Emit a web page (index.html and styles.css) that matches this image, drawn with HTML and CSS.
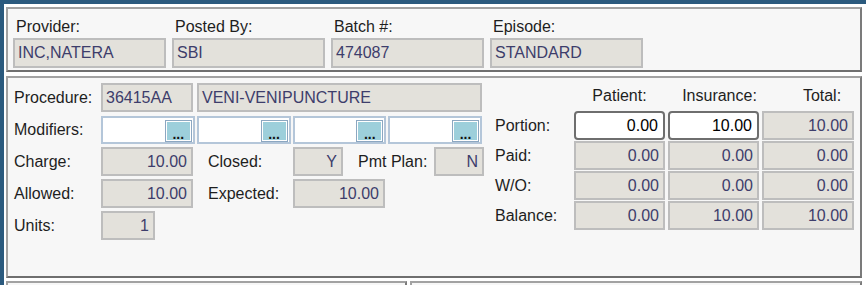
FILE: index.html
```html
<!DOCTYPE html>
<html lang="en">
<head>
    <meta charset="UTF-8">
    <title>Charge Detail</title>
    <link rel="stylesheet" href="styles.css">
</head>
<body>
    <div class="frame">
        <div class="panel header-panel">
            <div class="head-col">
                <div class="head-label">Provider:</div>
                <div class="fld head-fld">INC,NATERA</div>
            </div>
            <div class="head-col">
                <div class="head-label">Posted By:</div>
                <div class="fld head-fld">SBI</div>
            </div>
            <div class="head-col">
                <div class="head-label">Batch #:</div>
                <div class="fld head-fld">474087</div>
            </div>
            <div class="head-col">
                <div class="head-label">Episode:</div>
                <div class="fld head-fld">STANDARD</div>
            </div>
        </div>

        <div class="panel detail-panel">
            <div class="charge-info">
                <div class="row">
                    <span class="lbl">Procedure:</span>
                    <div class="fld w-code">36415AA</div>
                    <div class="fld w-desc">VENI-VENIPUNCTURE</div>
                </div>
                <div class="row">
                    <span class="lbl">Modifiers:</span>
                    <div class="modifier"><button class="dots">...</button></div>
                    <div class="modifier"><button class="dots">...</button></div>
                    <div class="modifier"><button class="dots">...</button></div>
                    <div class="modifier"><button class="dots">...</button></div>
                </div>
                <div class="row">
                    <span class="lbl">Charge:</span>
                    <div class="fld num w-code">10.00</div>
                    <span class="lbl lbl-mid">Closed:</span>
                    <div class="fld num w-flag">Y</div>
                    <span class="lbl lbl-plan">Pmt Plan:</span>
                    <div class="fld num w-flag">N</div>
                </div>
                <div class="row">
                    <span class="lbl">Allowed:</span>
                    <div class="fld num w-code">10.00</div>
                    <span class="lbl lbl-mid">Expected:</span>
                    <div class="fld num w-code">10.00</div>
                </div>
                <div class="row">
                    <span class="lbl">Units:</span>
                    <div class="fld num w-units">1</div>
                </div>
            </div>

            <div class="balances">
                <div class="bal-head">
                    <span></span>
                    <span class="col-patient">Patient:</span>
                    <span class="col-insurance">Insurance:</span>
                    <span class="col-total">Total:</span>
                </div>
                <div class="bal-row">
                    <span class="lbl">Portion:</span>
                    <div class="edit num">0.00</div>
                    <div class="edit num">10.00</div>
                    <div class="fld num">10.00</div>
                </div>
                <div class="bal-row">
                    <span class="lbl">Paid:</span>
                    <div class="fld num">0.00</div>
                    <div class="fld num">0.00</div>
                    <div class="fld num">0.00</div>
                </div>
                <div class="bal-row">
                    <span class="lbl">W/O:</span>
                    <div class="fld num">0.00</div>
                    <div class="fld num">0.00</div>
                    <div class="fld num">0.00</div>
                </div>
                <div class="bal-row">
                    <span class="lbl">Balance:</span>
                    <div class="fld num">0.00</div>
                    <div class="fld num">10.00</div>
                    <div class="fld num">10.00</div>
                </div>
            </div>
        </div>

        <div class="bottom-panels">
            <div class="panel bottom-left"></div>
            <div class="panel bottom-right"></div>
        </div>
    </div>
</body>
</html>
```

FILE: styles.css
```css
body {
    margin: 0;
    background: #2b5a7e;
    font-family: "Liberation Sans", Arial, sans-serif;
    font-size: 16px;
    color: #1e1e1e;
    overflow: hidden;
}

.frame {
    margin: 4px 0 0 4px;
    padding: 3px 4px 0 2px;
    background: #ffffff;
    min-height: 300px;
}

.panel {
    box-sizing: border-box;
    width: 856px;
    background: #f7f7f7;
    border: 2px solid;
    border-color: #a2a2a2 #7b7b7b #6f6f6f #a2a2a2;
}

/* read-only field */
.fld {
    box-sizing: border-box;
    height: 29px;
    line-height: 25px;
    padding: 0 4px 0 3px;
    background: #e3e1db;
    border: 2px solid #bdbdbd;
    color: #3d3d6b;
    white-space: nowrap;
}

.num {
    text-align: right;
}

/* header panel */
.header-panel {
    height: 65px;
    display: flex;
    gap: 6px;
    padding: 9px 0 0 5px;
}

.head-col {
    width: 153px;
}

.head-label {
    line-height: 18px;
    padding-left: 3px;
    margin-bottom: 2px;
}

.head-fld {
    height: 30px;
    line-height: 26px;
}

/* detail panel */
.detail-panel {
    margin-top: 4px;
    height: 202px;
    display: flex;
}

.charge-info {
    width: 470px;
    padding: 5px 0 0 6px;
    display: flex;
    flex-direction: column;
    gap: 3px;
}

.row {
    display: flex;
    align-items: center;
    height: 29px;
}

.lbl {
    width: 87px;
    flex-shrink: 0;
}

.lbl-mid {
    width: 85px;
    margin-left: 15px;
}

.lbl-plan {
    width: 76px;
    margin-left: 15px;
}

.w-code {
    width: 92px;
}

.w-desc {
    width: 285px;
    margin-left: 4px;
}

.w-flag {
    width: 50px;
}

.w-units {
    width: 54px;
}

.modifier {
    box-sizing: border-box;
    width: 94px;
    height: 28px;
    margin-right: 2px;
    background: #ffffff;
    border: 2px solid #b4c6d9;
    display: flex;
    justify-content: flex-end;
    align-items: flex-end;
    padding: 0 1px 0 0;
}

.dots {
    box-sizing: border-box;
    width: 27px;
    height: 22px;
    padding: 0;
    background: #9dcfdb;
    border: 1px solid #8ca7c1;
    box-shadow: inset 0 0 0 1px #ffffff;
    font-family: "Liberation Sans", Arial, sans-serif;
    font-size: 14px;
    font-weight: bold;
    line-height: 26px;
    color: #111111;
}

/* balances grid */
.balances {
    margin-left: 11px;
    padding-top: 9px;
}

.bal-head,
.bal-row {
    display: grid;
    grid-template-columns: 76px 91px 91px 92px;
    column-gap: 3px;
}

.bal-head {
    line-height: 18px;
    margin-bottom: 6px;
    text-align: center;
}

.col-insurance {
    padding-left: 12px;
}

.col-total {
    padding-left: 28px;
}

.bal-row {
    height: 29px;
    margin-bottom: 1px;
    align-items: center;
}

.bal-row .lbl {
    width: auto;
}

.bal-row .fld {
    padding-right: 4px;
}

.edit {
    box-sizing: border-box;
    height: 29px;
    line-height: 25px;
    padding: 0 5px;
    background: #ffffff;
    border: 2px solid #6e6e6e;
    border-radius: 4px;
    color: #000000;
}

/* bottom panels */
.bottom-panels {
    display: flex;
    gap: 3px;
    margin-top: 3px;
}

.bottom-left {
    width: 401px;
    height: 40px;
}

.bottom-right {
    width: 452px;
    height: 40px;
}
```
